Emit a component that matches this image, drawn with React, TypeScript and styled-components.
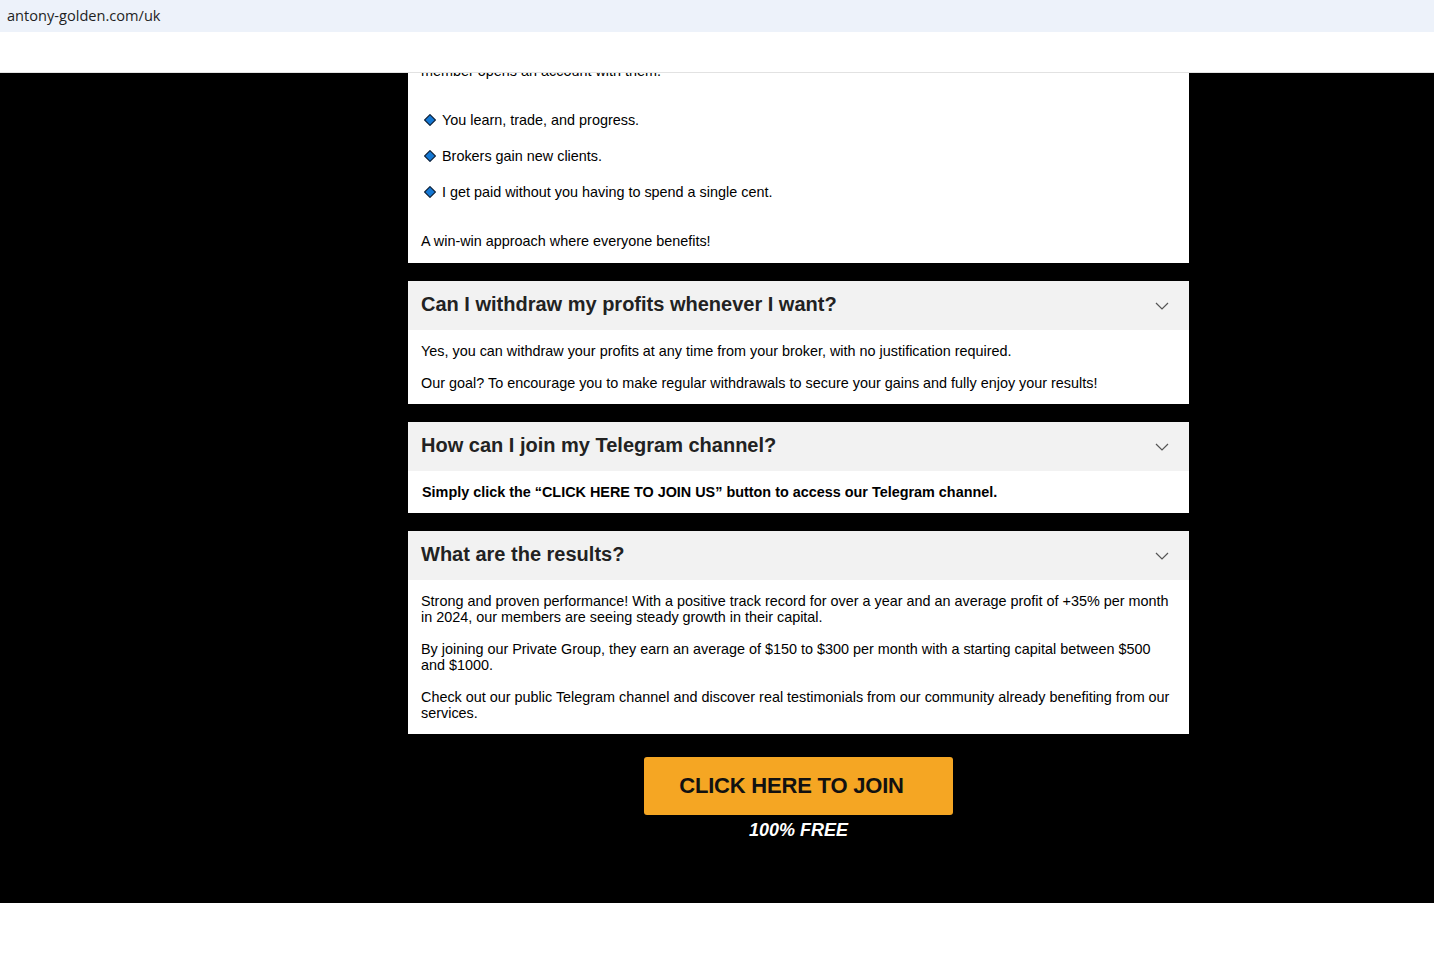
import React from "react";
import styled, { createGlobalStyle } from "styled-components";

const GlobalStyle = createGlobalStyle`
  html, body { margin: 0; padding: 0; background: #ffffff; }
  body { font-family: "Liberation Sans", Arial, sans-serif; }
  * { box-sizing: border-box; }
  p { margin: 0; }
`;

const Page = styled.div`
  width: 1434px;
  height: 979px;
  display: flex;
  flex-direction: column;
  overflow: hidden;
`;

const UrlBar = styled.div`
  height: 32px;
  flex: none;
  background: #edf2fa;
  display: flex;
  align-items: center;
  padding: 0 0 3px 7px;
  font-family: "Open Sans", "Noto Sans", sans-serif;
  font-size: 14.6px;
  color: #1f1f1f;
`;

const SiteBar = styled.div`
  height: 41px;
  flex: none;
  background: #ffffff;
  border-bottom: 1px solid #e2e2e2;
`;

const Main = styled.main`
  flex: none;
  height: 830px;
  background: #000000;
  overflow: hidden;
  display: flex;
  flex-direction: column;
  align-items: center;
  padding-left: 163px;
`;

const Column = styled.div`
  width: 781px;
  display: flex;
  flex-direction: column;
  gap: 18px;
`;

const Card = styled.section<{ $offset?: number }>`
  background: #ffffff;
  margin-top: ${(p) => (p.$offset ? `${p.$offset}px` : "0")};
`;

const CardHeader = styled.div`
  height: 49px;
  background: #f2f2f2;
  display: flex;
  align-items: center;
  justify-content: space-between;
  padding: 0 20px 0 13px;
`;

const Question = styled.h3`
  margin: 0 0 4px 0;
  font-size: 20px;
  font-weight: 700;
  color: #222222;
  line-height: 24px;
`;

const CardBody = styled.div<{ $gap?: number; $pb?: number }>`
  padding: 13px 13px ${(p) => p.$pb ?? 13}px 13px;
  display: flex;
  flex-direction: column;
  gap: ${(p) => p.$gap ?? 16}px;
  font-size: 14.4px;
  line-height: 16px;
  color: #000000;
`;

const Text = styled.p<{ $bold?: boolean; $space?: number }>`
  font-weight: ${(p) => (p.$bold ? 700 : 400)};
  margin-top: ${(p) => p.$space ?? 0}px;
  padding-left: ${(p) => (p.$bold ? 1 : 0)}px;
`;

const BulletList = styled.ul`
  list-style: none;
  margin: 33px 0 0 0;
  padding: 0 0 0 3px;
  display: flex;
  flex-direction: column;
  gap: 20px;
`;

const BulletItem = styled.li`
  display: flex;
  align-items: center;
  gap: 6px;
  line-height: 16px;
`;

const Diamond = () => (
  <svg width="12" height="12" viewBox="0 0 12 12" aria-hidden="true">
    <polygon points="6,0.6 11.4,6 6,11.4 0.6,6" fill="#1478d4" stroke="#0d2038" strokeWidth="1.1" />
  </svg>
);

const Chevron = () => (
  <svg width="14" height="8" viewBox="0 0 14 8" aria-hidden="true">
    <polyline points="1,1 7,7 13,1" fill="none" stroke="#555555" strokeWidth="1.2" />
  </svg>
);

const Cta = styled.div`
  display: flex;
  flex-direction: column;
  align-items: center;
  margin-top: 23px;
`;

const JoinButton = styled.a`
  width: 309px;
  height: 58px;
  background: #f5a623;
  border-radius: 3px;
  display: flex;
  align-items: center;
  justify-content: center;
  padding-right: 14px;
  font-size: 22px;
  letter-spacing: -0.2px;
  font-weight: 700;
  color: #111111;
  text-decoration: none;
  cursor: pointer;
`;

const FreeLabel = styled.div`
  margin-top: 5px;
  font-size: 18px;
  line-height: 21px;
  font-weight: 700;
  font-style: italic;
  color: #ffffff;
`;

const Footer = styled.div`
  flex: 1;
  background: #ffffff;
`;

type Faq = { q: string; body: React.ReactNode };

const faqs: Faq[] = [
  {
    q: "Can I withdraw my profits whenever I want?",
    body: (
      <>
        <Text>Yes, you can withdraw your profits at any time from your broker, with no justification required.</Text>
        <Text>Our goal? To encourage you to make regular withdrawals to secure your gains and fully enjoy your results!</Text>
      </>
    ),
  },
  {
    q: "How can I join my Telegram channel?",
    body: (
      <Text $bold>Simply click the “CLICK HERE TO JOIN US” button to access our Telegram channel.</Text>
    ),
  },
  {
    q: "What are the results?",
    body: (
      <>
        <Text>
          Strong and proven performance! With a positive track record for over a year and an average profit of +35% per month
          in 2024, our members are seeing steady growth in their capital.
        </Text>
        <Text>
          By joining our Private Group, they earn an average of $150 to $300 per month with a starting capital between $500
          and $1000.
        </Text>
        <Text>
          Check out our public Telegram channel and discover real testimonials from our community already benefiting from our
          services.
        </Text>
      </>
    ),
  },
];

const bullets = [
  "You learn, trade, and progress.",
  "Brokers gain new clients.",
  "I get paid without you having to spend a single cent.",
];

export default function App() {
  return (
    <>
      <GlobalStyle />
      <Page>
        <UrlBar>antony-golden.com/uk</UrlBar>
        <SiteBar />
        <Main>
          <Column>
            <Card $offset={-23}>
              <CardBody $gap={0} $pb={14}>
                <Text>member opens an account with them.</Text>
                <BulletList>
                  {bullets.map((b) => (
                    <BulletItem key={b}>
                      <Diamond />
                      <span>{b}</span>
                    </BulletItem>
                  ))}
                </BulletList>
                <Text $space={33}>A win-win approach where everyone benefits!</Text>
              </CardBody>
            </Card>
            {faqs.map((f) => (
              <Card key={f.q}>
                <CardHeader>
                  <Question>{f.q}</Question>
                  <Chevron />
                </CardHeader>
                <CardBody>{f.body}</CardBody>
              </Card>
            ))}
          </Column>
          <Cta>
            <JoinButton>CLICK HERE TO JOIN</JoinButton>
            <FreeLabel>100% FREE</FreeLabel>
          </Cta>
        </Main>
        <Footer />
      </Page>
    </>
  );
}
